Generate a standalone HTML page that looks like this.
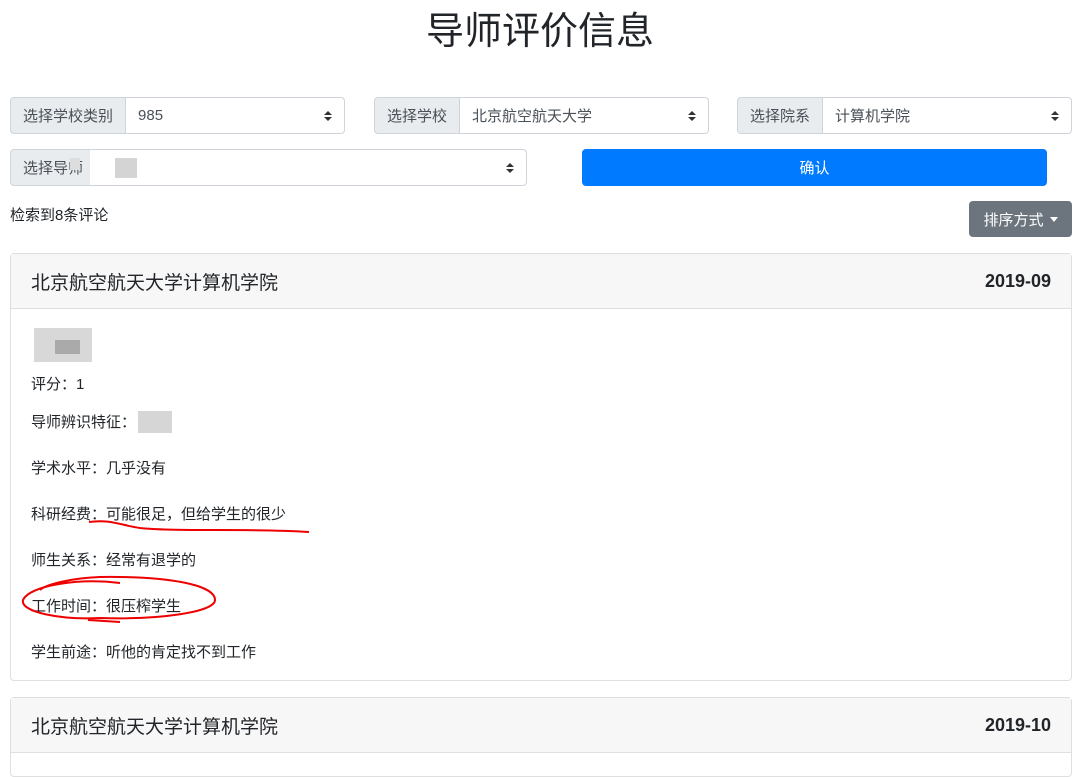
<!DOCTYPE html>
<html><head><meta charset="utf-8"><style>
*{box-sizing:border-box;margin:0;padding:0}
body{width:1080px;height:757px;overflow:hidden;background:#fff;font-family:"Liberation Sans","Noto Sans CJK SC",sans-serif;color:#212529;position:relative}
.a{position:absolute}
h1{position:absolute;top:9px;left:0;width:1080px;text-align:center;font-weight:400;font-size:38px;line-height:46px;color:#212529}
.ig{position:absolute;height:37px;display:flex;font-size:15px}
.lab{background:#e9ecef;border:1px solid #ced4da;border-radius:4px 0 0 4px;padding:0 12px;display:flex;align-items:center;color:#495057}
.sel{flex:1;border:1px solid #ced4da;border-left:none;border-radius:0 4px 4px 0;display:flex;align-items:center;padding:0 12px;color:#495057;position:relative}
.sel:after{content:"";position:absolute;right:12px;top:13px;border:4px solid transparent;border-bottom:4px solid #333;border-top:none}
.sel:before{content:"";position:absolute;right:12px;top:19px;border:4px solid transparent;border-top:4px solid #333;border-bottom:none}
.card{position:absolute;left:10px;width:1062px;border:1px solid #dfdfdf;border-radius:4px}
.ch{height:55px;background:#f7f7f7;border-bottom:1px solid #dfdfdf;display:flex;justify-content:space-between;align-items:center;padding:0 20px;font-size:19px}
.ch b{font-weight:600;font-size:18px}
.row{position:absolute;left:31px;font-size:15px;color:#212529}
.blur{position:absolute;background:#ccc}
</style></head><body>
<h1>导师评价信息</h1>
<div class="ig" style="left:10px;top:97px;width:335px"><div class="lab">选择学校类别</div><div class="sel">985</div></div>
<div class="ig" style="left:374px;top:97px;width:335px"><div class="lab">选择学校</div><div class="sel">北京航空航天大学</div></div>
<div class="ig" style="left:737px;top:97px;width:335px"><div class="lab">选择院系</div><div class="sel">计算机学院</div></div>
<div class="ig" style="left:10px;top:149px;width:517px"><div class="lab">选择导师</div><div class="sel"></div></div>
<div class="blur" style="left:90px;top:150px;width:85px;height:35px;background:#fff"></div>
<div class="blur" style="left:70px;top:158px;width:10px;height:12px;background:#ddd"></div>
<div class="blur" style="left:115px;top:158px;width:22px;height:20px;background:#d4d4d4"></div>
<div class="a" style="left:582px;top:149px;width:465px;height:37px;background:#007bff;border-radius:4px;color:#fff;font-size:15px;display:flex;align-items:center;justify-content:center">确认</div>
<div class="a" style="left:10px;top:204px;font-size:15px">检索到8条评论</div>
<div class="a" style="left:969px;top:201px;width:103px;height:36px;background:#6c757d;border-radius:4px;color:#fff;font-size:15px;display:flex;align-items:center;justify-content:center">排序方式 <span style="margin-left:6px;border:4.5px solid transparent;border-top:5px solid #fff;border-bottom:none;display:inline-block"></span></div>
<div class="card" style="top:253px;height:428px"><div class="ch"><span>北京航空航天大学计算机学院</span><b>2019-09</b></div></div>
<div class="blur" style="left:34px;top:328px;width:58px;height:34px;background:#d8d8d8"></div>
<div class="blur" style="left:55px;top:340px;width:25px;height:14px;background:#aaa"></div>
<div class="row" style="top:373px">评分：1</div>
<div class="row" style="top:411px">导师辨识特征：</div>
<div class="blur" style="left:138px;top:411px;width:34px;height:22px;background:#d6d6d6"></div>
<div class="row" style="top:457px">学术水平：几乎没有</div>
<div class="row" style="top:503px">科研经费：可能很足，但给学生的很少</div>
<div class="row" style="top:549px">师生关系：经常有退学的</div>
<div class="row" style="top:595px">工作时间：很压榨学生</div>
<div class="row" style="top:641px">学生前途：听他的肯定找不到工作</div>
<svg class="a" style="left:0;top:0" width="1080" height="757"><path d="M89 522 C110 519 120 525 140 528 C180 532 250 528 309 532" stroke="#e00" stroke-width="2" fill="none"/>
<path d="M120 583 C80 578 30 585 23 600 C20 612 60 620 100 618 C160 620 215 612 215 600 C215 585 170 576 100 577 C70 578 45 585 40 590 M88 620 L120 622" stroke="#e00" stroke-width="2" fill="none"/></svg>
<div class="card" style="top:697px;height:80px"><div class="ch"><span>北京航空航天大学计算机学院</span><b>2019-10</b></div></div>
</body></html>
